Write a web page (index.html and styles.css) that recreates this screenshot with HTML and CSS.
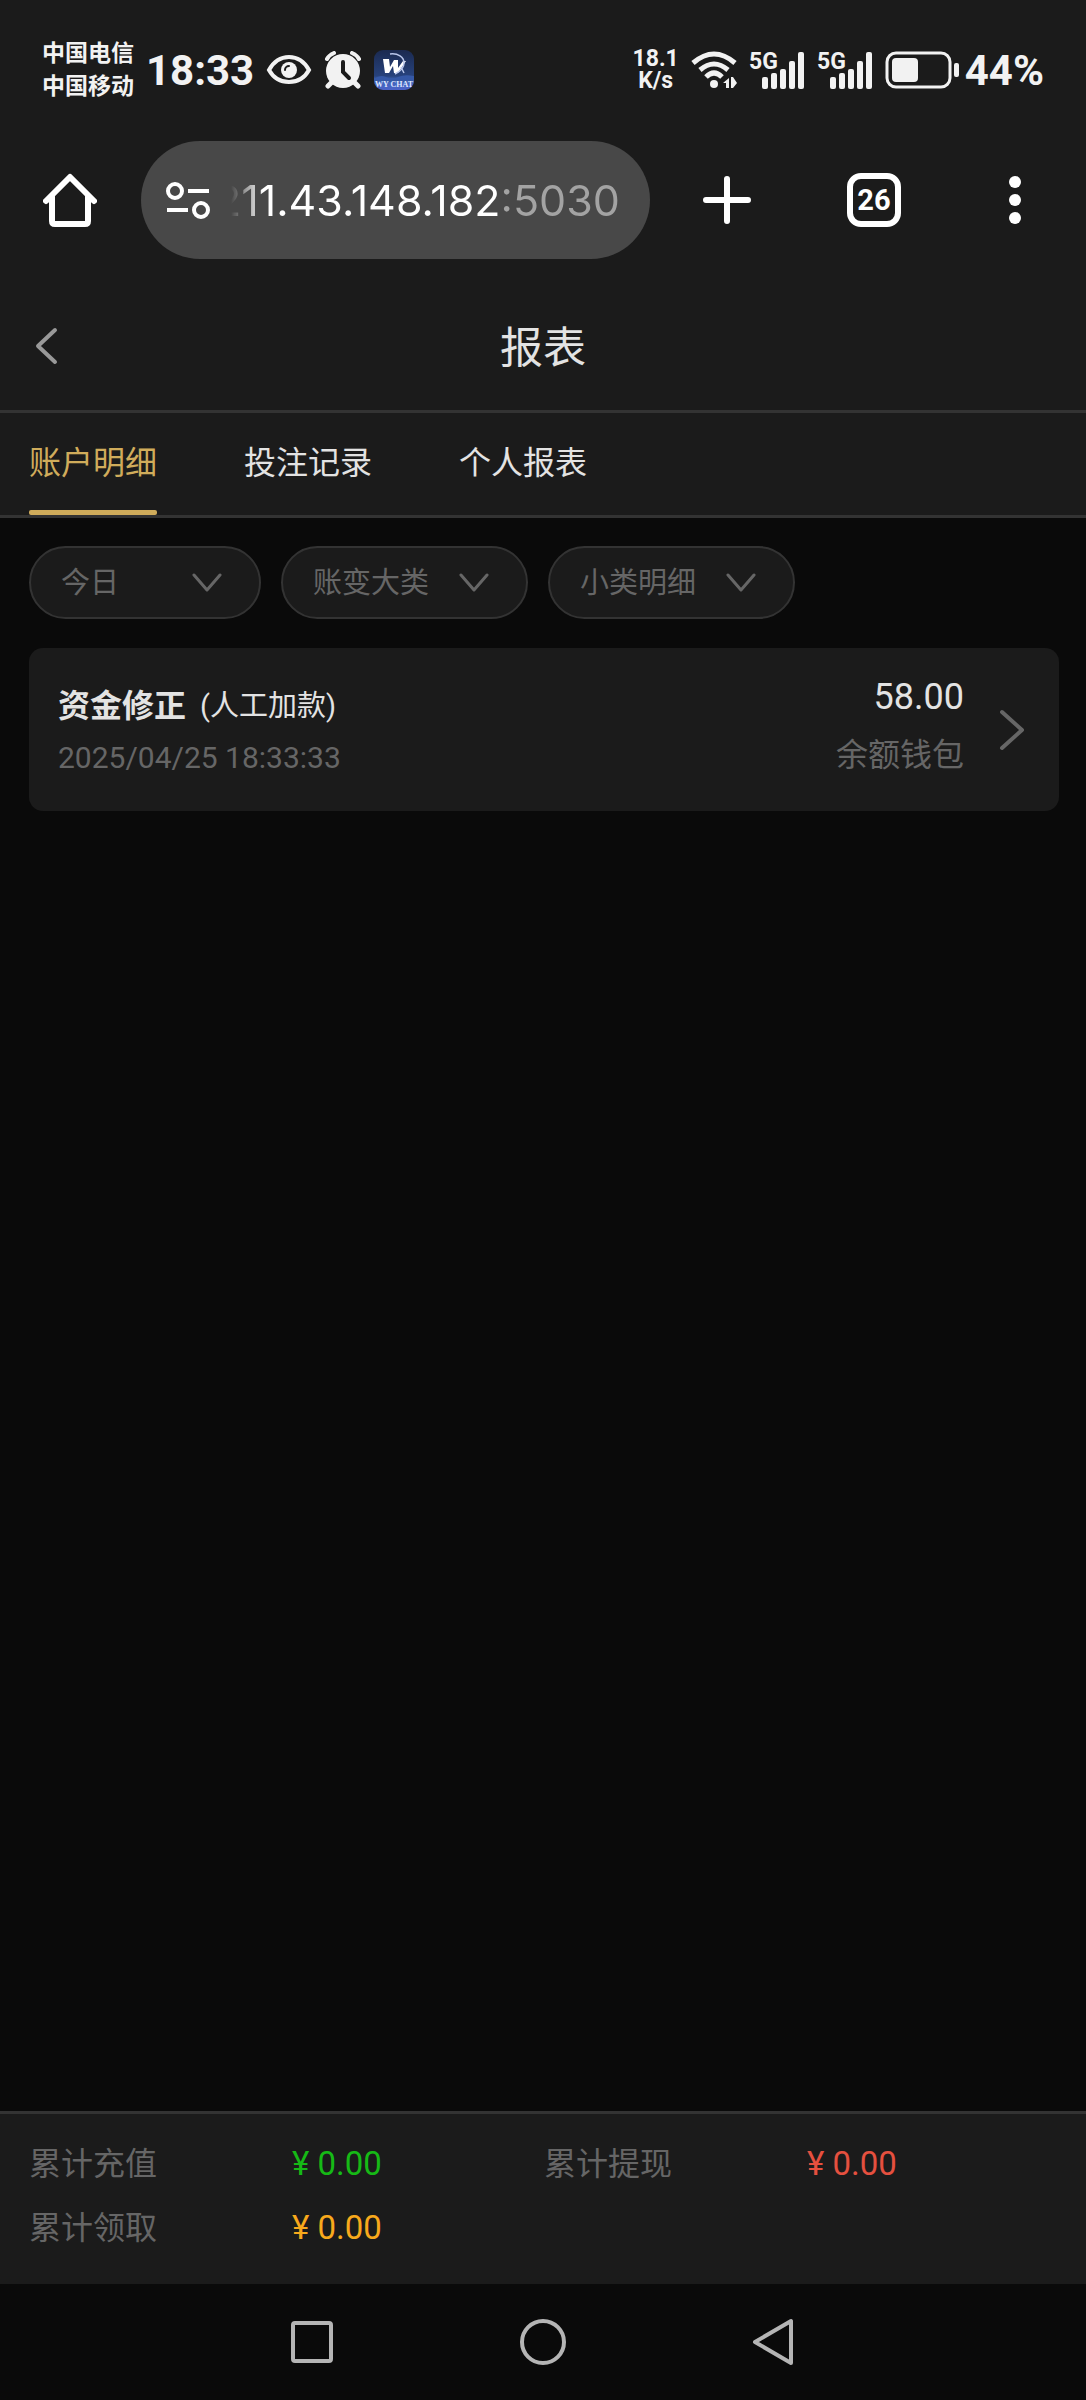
FILE: index.html
```html
<!DOCTYPE html>
<html lang="zh-CN">
<head>
  <meta charset="UTF-8">
  <meta name="viewport" content="width=device-width, initial-scale=1.0">
  <title>报表</title>
  <link rel="stylesheet" href="styles.css">
</head>
<body>
  <div class="status-bar">
    <div class="status-left">
      <div class="carrier">
        <span>中国电信</span>
        <span>中国移动</span>
      </div>
      <span class="clock">18:33</span>
      <svg class="icon-eye" width="46" height="36" viewBox="0 0 46 36">
        <path d="M3 18C8 9 15 5 23 5s15 4 20 13c-5 9-12 12-20 12S8 27 3 18z" fill="none" stroke="#f2f2f2" stroke-width="4"/>
        <circle cx="23" cy="18" r="8" fill="#f2f2f2"/>
        <path d="M19 18a4 4 0 0 1 4-4" fill="none" stroke="#1b1b1b" stroke-width="2" stroke-linecap="round"/>
      </svg>
      <svg class="icon-alarm" width="38" height="38" viewBox="0 0 38 38">
        <g fill="none" stroke="#f2f2f2" stroke-linecap="round">
          <path d="M3 8q2-4 7-6M35 8q-2-4-7-6" stroke-width="4"/>
          <path d="M8 31l-4 4M30 31l4 4" stroke-width="5"/>
        </g>
        <circle cx="19" cy="20" r="17" fill="#f2f2f2"/>
        <path d="M19 11v10l6 6" fill="none" stroke="#1b1b1b" stroke-width="4" stroke-linecap="round"/>
      </svg>
      <svg class="icon-chat" width="40" height="40" viewBox="0 0 40 40">
        <defs>
          <linearGradient id="chatBg" x1="0" y1="0" x2="0" y2="1">
            <stop offset="0" stop-color="#1b2a50"/>
            <stop offset="0.65" stop-color="#27427c"/>
            <stop offset="0.75" stop-color="#3f66b8"/>
            <stop offset="1" stop-color="#4c62c8"/>
          </linearGradient>
        </defs>
        <rect width="40" height="40" rx="9" fill="url(#chatBg)"/>
        <path d="M0 29q6-5 12-2t12 0 16-1v6H0z" fill="#3558a6"/>
        <path d="M9 9h6l1 8 4-7h4v8l5-7h3l-8 12h-4l-1-7-4 7h-4z" fill="#fff"/>
        <path d="M16 4c8-1 14 3 14 9 0 5-3 8-9 11M27 17l3 6" fill="none" stroke="#b9c6ea" stroke-width="1.5"/>
        <text x="20" y="37" text-anchor="middle" class="chat-label">WY CHAT</text>
      </svg>
    </div>
    <div class="status-right">
      <div class="speed">
        <span>18.1</span>
        <span>K/s</span>
      </div>
      <svg class="icon-wifi" width="46" height="38" viewBox="0 0 46 38">
        <g fill="none" stroke="#f2f2f2" stroke-width="5">
          <path d="M2 12Q23-6 44 12"/>
          <path d="M9 19Q23 7 37 19"/>
          <path d="M15 26Q23 18 31 26"/>
        </g>
        <circle cx="23" cy="33" r="4" fill="#f2f2f2"/>
        <path d="M32 32l6-5v10h-3v-5zM40 26h2l4 6-4 5h-2z" fill="#f2f2f2"/>
      </svg>
      <svg class="icon-signal" width="56" height="38" viewBox="0 0 56 38" fill="#f2f2f2">
        <text x="0" y="18" class="net-label">5G</text>
        <rect x="13" y="26" width="6" height="12" rx="2"/>
        <rect x="22" y="22" width="6" height="16" rx="2"/>
        <rect x="31" y="18" width="6" height="20" rx="2"/>
        <rect x="40" y="10" width="6" height="28" rx="2"/>
        <rect x="49" y="1" width="6" height="37" rx="2"/>
      </svg>
      <svg class="icon-signal" width="56" height="38" viewBox="0 0 56 38" fill="#f2f2f2">
        <text x="0" y="18" class="net-label">5G</text>
        <rect x="13" y="26" width="6" height="12" rx="2"/>
        <rect x="22" y="22" width="6" height="16" rx="2"/>
        <rect x="31" y="18" width="6" height="20" rx="2"/>
        <rect x="40" y="10" width="6" height="28" rx="2"/>
        <rect x="49" y="1" width="6" height="37" rx="2"/>
      </svg>
      <div class="battery">
        <svg width="74" height="38" viewBox="0 0 74 38">
          <rect x="2" y="2" width="63" height="34" rx="9" fill="none" stroke="#f2f2f2" stroke-width="3"/>
          <rect x="7" y="7" width="26" height="24" rx="4" fill="#f2f2f2"/>
          <rect x="69" y="12" width="5" height="14" rx="2" fill="#f2f2f2"/>
        </svg>
        <span class="battery-level">44%</span>
      </div>
    </div>
  </div>

  <div class="browser-bar">
    <button class="icon-btn" aria-label="主页">
      <svg width="54" height="54" viewBox="0 0 54 54" fill="none" stroke="#fff" stroke-width="6" stroke-linejoin="round" stroke-linecap="round">
        <path d="M3 28L27 4l24 24"/>
        <path d="M9 24v24q0 3 3 3h30q3 0 3-3V24"/>
      </svg>
    </button>
    <div class="address">
      <svg width="46" height="38" viewBox="0 0 46 38" fill="none" stroke="#fff" stroke-width="4">
        <circle cx="10" cy="10" r="7"/>
        <path d="M23 10h21M2 29h21"/>
        <circle cx="36" cy="29" r="7"/>
      </svg>
      <input type="text" class="address-input" value="211.43.148.182:5030" aria-label="网址">
    </div>
    <button class="icon-btn btn-plus" aria-label="新标签页">
      <svg width="48" height="48" viewBox="0 0 48 48" stroke="#fff" stroke-width="6" stroke-linecap="round">
        <path d="M24 3v42M3 24h42"/>
      </svg>
    </button>
    <button class="icon-btn btn-tabs">26</button>
    <button class="icon-btn btn-more" aria-label="更多">
      <svg width="12" height="50" viewBox="0 0 12 50" fill="#fff">
        <circle cx="6" cy="7" r="6"/>
        <circle cx="6" cy="25" r="6"/>
        <circle cx="6" cy="43" r="6"/>
      </svg>
    </button>
  </div>

  <header class="page-header">
    <button class="icon-btn" aria-label="返回">
      <svg width="24" height="38" viewBox="0 0 24 38" fill="none" stroke="#999" stroke-width="4" stroke-linecap="round" stroke-linejoin="round">
        <path d="M20 3L3 19l17 16"/>
      </svg>
    </button>
    <h1>报表</h1>
  </header>

  <nav class="tabs">
    <a href="#account" class="tab active">账户明细</a>
    <a href="#bets" class="tab">投注记录</a>
    <a href="#personal" class="tab">个人报表</a>
  </nav>

  <main class="content">
    <div class="filters">
      <div class="filter">
        <select aria-label="日期"><option>今日</option></select>
        <svg width="30" height="20" viewBox="0 0 30 20"><path d="M2 2l13 15L28 2"/></svg>
      </div>
      <div class="filter">
        <select aria-label="账变大类"><option>账变大类</option></select>
        <svg width="30" height="20" viewBox="0 0 30 20"><path d="M2 2l13 15L28 2"/></svg>
      </div>
      <div class="filter">
        <select aria-label="小类明细"><option>小类明细</option></select>
        <svg width="30" height="20" viewBox="0 0 30 20"><path d="M2 2l13 15L28 2"/></svg>
      </div>
    </div>

    <a href="#detail" class="record">
      <div class="record-info">
        <div class="record-title"><strong>资金修正</strong><span>(人工加款)</span></div>
        <div class="record-date">2025/04/25 18:33:33</div>
      </div>
      <div class="record-value">
        <div class="record-amount">58.00</div>
        <div class="record-wallet">余额钱包</div>
      </div>
      <svg width="26" height="42" viewBox="0 0 26 42" fill="none" stroke="#666" stroke-width="4" stroke-linecap="round" stroke-linejoin="round">
        <path d="M3 3l20 18L3 39"/>
      </svg>
    </a>
  </main>

  <footer class="summary">
    <div class="summary-item"><span>累计充值</span><span class="money green">¥ 0.00</span></div>
    <div class="summary-item"><span>累计提现</span><span class="money red">¥ 0.00</span></div>
    <div class="summary-item"><span>累计领取</span><span class="money orange">¥ 0.00</span></div>
  </footer>

  <div class="system-nav">
    <button class="icon-btn" aria-label="最近任务">
      <svg width="48" height="48" viewBox="0 0 48 48"><rect x="5" y="5" width="38" height="38" rx="2"/></svg>
    </button>
    <button class="icon-btn" aria-label="主屏幕">
      <svg width="48" height="48" viewBox="0 0 48 48"><circle cx="24" cy="24" r="21"/></svg>
    </button>
    <button class="icon-btn" aria-label="返回上一级">
      <svg width="48" height="48" viewBox="0 0 48 48"><path d="M41 3v42L5 24z"/></svg>
    </button>
  </div>
</body>
</html>
```

FILE: styles.css
```css
:root {
  --bg: #0a0a0a;
  --panel: #1b1b1b;
  --line: #333;
  --text: #e3e3e3;
  --muted: #666;
  --gold: #d0ac5b;
  --status: #f2f2f2;
}

* {
  box-sizing: border-box;
}
body {
  margin: 0;
  min-height: 100vh;
  display: flex;
  flex-direction: column;
  background: var(--bg);
  color: var(--text);
  font-family: Roboto, "Noto Sans CJK SC", sans-serif;
  font-size: 32px;
}
a {
  color: inherit;
  text-decoration: none;
}
svg {
  display: block;
  flex-shrink: 0;
}
.icon-btn {
  display: flex;
  align-items: center;
  justify-content: center;
  flex-shrink: 0;
  padding: 0;
  border: none;
  background: none;
  color: #fff;
  cursor: pointer;
}

/* phone status bar */
.status-bar {
  display: flex;
  justify-content: space-between;
  align-items: center;
  height: 140px;
  padding: 0 42px;
  background: var(--panel);
  color: var(--status);
  font-weight: 700;
}
.status-left,
.status-right {
  display: flex;
  align-items: center;
  gap: 12px;
}
.carrier {
  display: flex;
  flex-direction: column;
  font-size: 23px;
  line-height: 33px;
}
.clock,
.battery-level {
  font-size: 42px;
}
.battery {
  display: flex;
  align-items: center;
  gap: 6px;
}
.speed {
  display: flex;
  flex-direction: column;
  align-items: center;
  font-size: 23px;
  line-height: 22px;
}
.icon-signal {
  overflow: visible;
}
.net-label {
  font-size: 23px;
}
.chat-label {
  fill: #dfe6ff;
  font-family: "Liberation Serif", serif;
  font-size: 8px;
}

/* browser toolbar */
.browser-bar {
  display: flex;
  align-items: center;
  height: 141px;
  padding: 0 65px 22px 43px;
  background: var(--panel);
}
.address {
  display: flex;
  align-items: center;
  flex: 1;
  min-width: 0;
  height: 118px;
  margin-left: 44px;
  padding: 0 20px 0 24px;
  gap: 4px;
  border-radius: 59px;
  background: #484848;
}
/* port is dimmed, the start of the address fades out on the left */
.address-input {
  flex: 1;
  min-width: 0;
  padding: 0;
  border: none;
  outline: none;
  font-family: Inter, sans-serif;
  font-size: 43px;
  color: transparent;
  background: linear-gradient(to right, transparent 16px, #fff 48px, #fff 283px, #a3a3a3 283px);
  -webkit-background-clip: text;
  background-clip: text;
}
.btn-plus {
  margin-left: 53px;
}
.btn-tabs {
  width: 54px;
  height: 54px;
  margin-left: 96px;
  border: 6px solid #fff;
  border-radius: 14px;
  font-family: inherit;
  font-size: 29px;
  font-weight: 700;
}
.btn-more {
  margin-left: 108px;
}

/* page header and tabs */
.page-header {
  display: grid;
  grid-template-columns: 1fr auto 1fr;
  align-items: center;
  height: 132px;
  padding: 0 35px;
  background: var(--panel);
  border-bottom: 3px solid var(--line);
}
.page-header .icon-btn {
  justify-self: start;
}
.page-header h1 {
  margin: 0;
  padding-bottom: 4px;
  font-size: 43px;
  font-weight: 400;
}
.tabs {
  display: flex;
  gap: 87px;
  height: 105px;
  padding: 0 29px;
  background: var(--panel);
  border-bottom: 3px solid var(--line);
}
.tab {
  display: flex;
  align-items: center;
  padding-bottom: 8px;
}
.tab.active {
  position: relative;
  color: var(--gold);
}
.tab.active::after {
  content: "";
  position: absolute;
  left: 0;
  right: 0;
  bottom: 0;
  height: 5px;
  border-radius: 2px;
  background: var(--gold);
}

/* filters */
.content {
  flex: 1;
  padding: 28px 27px 28px 29px;
}
.filters {
  display: flex;
  gap: 20px;
  margin-bottom: 29px;
}
.filter {
  display: grid;
  align-items: center;
}
.filter select,
.filter svg {
  grid-area: 1 / 1;
}
.filter select {
  appearance: none;
  min-width: 232px;
  height: 73px;
  padding: 0 96px 0 30px;
  border: 2px solid var(--line);
  border-radius: 37px;
  background: var(--panel);
  color: var(--muted);
  font-family: inherit;
  font-size: 29px;
}
.filter svg {
  justify-self: end;
  margin-right: 39px;
  fill: none;
  stroke: var(--muted);
  stroke-width: 3px;
  stroke-linecap: round;
  stroke-linejoin: round;
  pointer-events: none;
}

/* record card */
.record {
  display: flex;
  align-items: center;
  height: 163px;
  padding: 0 34px 0 29px;
  border-radius: 14px;
  background: var(--panel);
}
.record-info {
  flex: 1;
  padding-top: 8px;
}
.record-title {
  display: flex;
  align-items: center;
  gap: 14px;
  line-height: 48px;
}
.record-title span {
  font-size: 29px;
}
.record-date {
  color: var(--muted);
  font-size: 30px;
  line-height: 56px;
}
.record-value {
  margin-right: 35px;
  padding-bottom: 8px;
  text-align: right;
}
.record-amount {
  font-size: 36px;
  line-height: 58px;
}
.record-wallet {
  color: var(--muted);
  line-height: 58px;
}

/* totals */
.summary {
  display: grid;
  grid-template-columns: 1fr 1fr;
  align-content: start;
  padding: 18px 27px 24px 29px;
  background: var(--panel);
  border-top: 3px solid var(--line);
  line-height: 64px;
}
.summary-item {
  display: grid;
  grid-template-columns: 263px 1fr;
  color: var(--muted);
}
.money {
  font-size: 33px;
}
.green {
  color: #16b916;
}
.red {
  color: #e5503f;
}
.orange {
  color: #f8a91c;
}

/* android navigation */
.system-nav {
  display: flex;
  justify-content: center;
  align-items: center;
  gap: 183px;
  height: 116px;
}
.system-nav svg {
  fill: none;
  stroke: #b5b5b5;
  stroke-width: 4px;
  stroke-linejoin: round;
}
```
